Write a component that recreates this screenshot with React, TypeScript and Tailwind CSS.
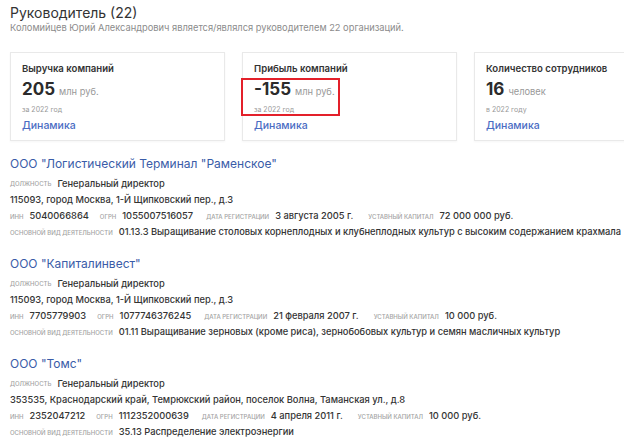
const stats = [
  { title: "Выручка компаний", value: "205", unit: "млн руб.", note: "за 2022 год", marked: false },
  { title: "Прибыль компаний", value: "-155", unit: "млн руб.", note: "за 2022 год", marked: true },
  { title: "Количество сотрудников", value: "16", unit: "человек", note: "в 2022 году", marked: false },
];

const companies = [
  {
    name: 'ООО "Логистический Терминал "Раменское"',
    position: "Генеральный директор",
    address: "115093, город Москва, 1-Й Щипковский пер., д.3",
    inn: "5040066864",
    ogrn: "1055007516057",
    date: "3 августа 2005 г.",
    capital: "72 000 000 руб.",
    activity: "01.13.3 Выращивание столовых корнеплодных и клубнеплодных культур с высоким содержанием крахмала",
  },
  {
    name: 'ООО "Капиталинвест"',
    position: "Генеральный директор",
    address: "115093, город Москва, 1-Й Щипковский пер., д.3",
    inn: "7705779903",
    ogrn: "1077746376245",
    date: "21 февраля 2007 г.",
    capital: "10 000 руб.",
    activity: "01.11 Выращивание зерновых (кроме риса), зернобобовых культур и семян масличных культур",
  },
  {
    name: 'ООО "Томс"',
    position: "Генеральный директор",
    address: "353535, Краснодарский край, Темрюкский район, поселок Волна, Таманская ул., д.8",
    inn: "2352047212",
    ogrn: "1112352000639",
    date: "4 апреля 2011 г.",
    capital: "10 000 руб.",
    activity: "35.13 Распределение электроэнергии",
  },
];

function Label({ children }: { children: React.ReactNode }) {
  return (
    <span className="uppercase text-[6px] text-[#a3a3a3] mr-[6px]">{children}</span>
  );
}

export default function App() {
  return (
    <div className="w-[624px] h-[445px] overflow-hidden bg-white pl-[10px] font-['Inter','Noto_Sans',sans-serif] text-[#333]">
      {/* Header */}
      <h1 className="mt-[3px] text-[14px] leading-[20px] text-[#333]">Руководитель (22)</h1>
      <p className="text-[9.3px] leading-[10px] text-[#8c8c8c] whitespace-nowrap">
        Коломийцев Юрий Александрович является/являлся руководителем 22 организаций.
      </p>

      {/* Stat cards */}
      <div className="mt-[19px] flex gap-[17px]">
        {stats.map((s, i) => (
          <div
            key={i}
            className="relative shrink-0 w-[215px] h-[89px] border border-[#e9e9e9] shadow-[0_1px_2px_rgba(0,0,0,0.04)] pt-[10px] pl-[11px]"
          >
            <div className="text-[9.6px] leading-[12px] font-semibold text-[#333] whitespace-nowrap">{s.title}</div>
            <div className="mt-[3px] flex items-baseline leading-[22px]">
              <span className="text-[17px] font-bold text-[#2b2b2b]">{s.value}</span>
              <span className="ml-[4px] text-[9.3px] text-[#999]">{s.unit}</span>
            </div>
            <div className="mt-[2px] text-[7px] leading-[10px] text-[#999]">{s.note}</div>
            <div className="mt-[4px] text-[10.5px] leading-[14px] font-medium text-[#4a6cc3]">Динамика</div>
            {s.marked && (
              <div className="absolute left-[-2px] top-[25px] w-[99px] h-[38px] border-2 border-[#e3202a]" />
            )}
          </div>
        ))}
      </div>

      {/* Companies */}
      <div className="mt-[13px] flex flex-col gap-[14px]">
        {companies.map((c, i) => (
          <div key={i} className="flex flex-col whitespace-nowrap">
            <div className="h-[20px] leading-[20px] text-[12px] text-[#3a5ca8]">{c.name}</div>
            <div className="mt-[1px] h-[17px] flex items-center text-[9.3px] font-medium">
              <Label>должность</Label>
              {c.position}
            </div>
            <div className="h-[16px] flex items-center text-[9.3px] font-medium">{c.address}</div>
            <div className="h-[16px] flex items-center text-[9.3px] font-medium">
              <Label>инн</Label>
              <span className="mr-[11px]">{c.inn}</span>
              <Label>огрн</Label>
              <span className="mr-[13px]">{c.ogrn}</span>
              <Label>дата регистрации</Label>
              <span className="mr-[15px]">{c.date}</span>
              <Label>уставный капитал</Label>
              <span>{c.capital}</span>
            </div>
            <div className="h-[16px] flex items-center text-[9.3px] font-medium">
              <Label>основной вид деятельности</Label>
              {c.activity}
            </div>
          </div>
        ))}
      </div>
    </div>
  );
}
